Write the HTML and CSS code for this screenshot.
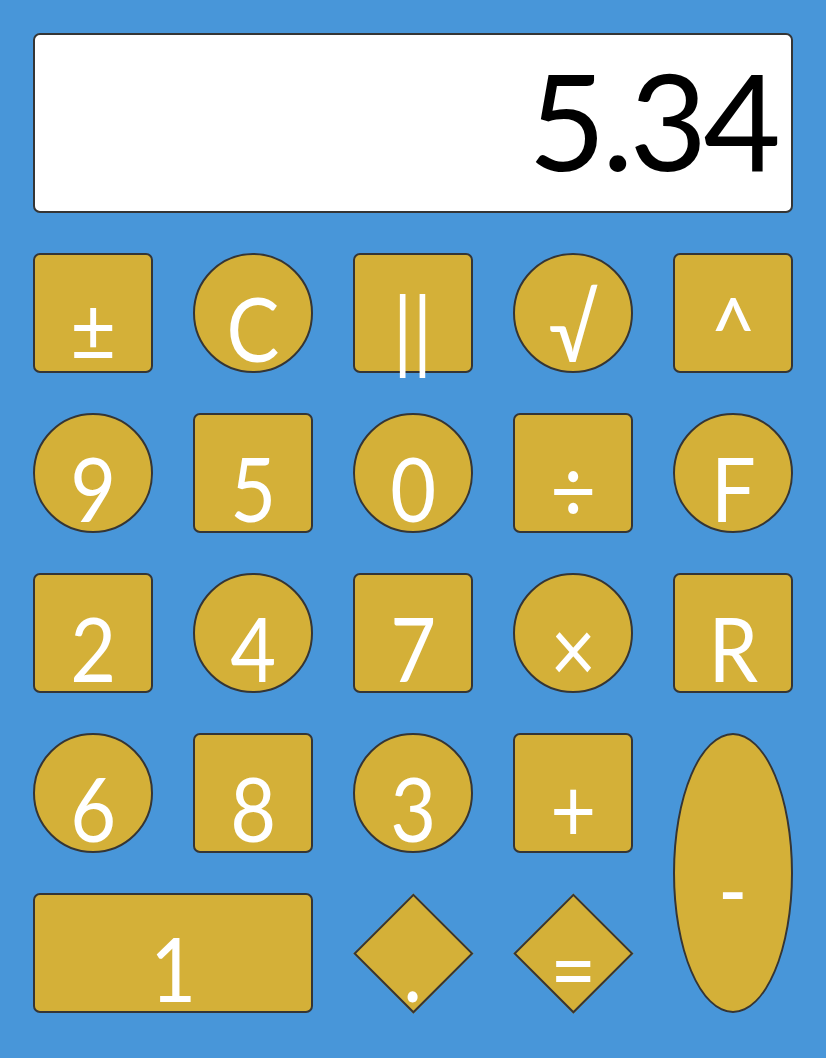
FILE: index.html
```html
<!DOCTYPE html>
<html>
<head>
<meta charset="utf-8">
<link rel="stylesheet" href="styles.css">
</head>
<body>
<div class="calc">
  <div class="display"><span class="value">5.34</span></div>
  <div class="keys">
    <div class="key square"><span class="label">±</span></div>
    <div class="key circle"><span class="label">C</span></div>
    <div class="key square"><span class="label">||</span></div>
    <div class="key circle"><span class="label">√</span></div>
    <div class="key square"><span class="label">^</span></div>

    <div class="key circle"><span class="label">9</span></div>
    <div class="key square"><span class="label">5</span></div>
    <div class="key circle"><span class="label">0</span></div>
    <div class="key square"><span class="label">÷</span></div>
    <div class="key circle"><span class="label">F</span></div>

    <div class="key square"><span class="label">2</span></div>
    <div class="key circle"><span class="label">4</span></div>
    <div class="key square"><span class="label">7</span></div>
    <div class="key circle"><span class="label">×</span></div>
    <div class="key square"><span class="label">R</span></div>

    <div class="key circle"><span class="label">6</span></div>
    <div class="key square"><span class="label">8</span></div>
    <div class="key circle"><span class="label">3</span></div>
    <div class="key square"><span class="label">+</span></div>
    <div class="key ellipse"><span class="label">-</span></div>

    <div class="key square wide"><span class="label">1</span></div>
    <div class="key diamond"><span class="label">.</span></div>
    <div class="key diamond"><span class="label">=</span></div>
  </div>
</div>
</body>
</html>
```
FILE: styles.css
```css
html, body {
  margin: 0;
  padding: 0;
}
body {
  background: #4896d9;
  font-family: Lato, "Open Sans", "DejaVu Sans", sans-serif;
}
.calc {
  padding: 33px;
  display: flex;
  flex-direction: column;
  gap: 40px;
}
.display {
  box-sizing: border-box;
  width: 760px;
  height: 180px;
  background: #ffffff;
  border: 2px solid #353535;
  border-radius: 7px;
  display: flex;
  align-items: center;
  justify-content: flex-end;
  padding: 0 14px 6px 0;
}
.value {
  font-size: 134px;
  line-height: 1;
  color: #000;
  letter-spacing: -4px;
}
.keys {
  display: grid;
  grid-template-columns: repeat(5, 120px);
  grid-auto-rows: 120px;
  gap: 40px;
}
.key {
  position: relative;
  box-sizing: border-box;
  display: flex;
  align-items: center;
  justify-content: center;
  color: #ffffff;
  font-size: 90px;
}
.square, .circle, .ellipse {
  background: #d4b038;
  border: 2px solid #353535;
}
.square { border-radius: 7px; }
.circle { border-radius: 50%; }
.ellipse {
  border-radius: 50%;
  grid-row: span 2;
}
.wide { grid-column: span 2; }
.diamond::before {
  content: "";
  position: absolute;
  box-sizing: border-box;
  top: 17.6px;
  left: 17.6px;
  width: 84.8px;
  height: 84.8px;
  background: #d4b038;
  border: 2px solid #353535;
  transform: rotate(45deg);
}
.label {
  position: relative;
  display: block;
  line-height: 1;
  padding-top: 28px;
  transform: scaleX(0.88);
}
```
